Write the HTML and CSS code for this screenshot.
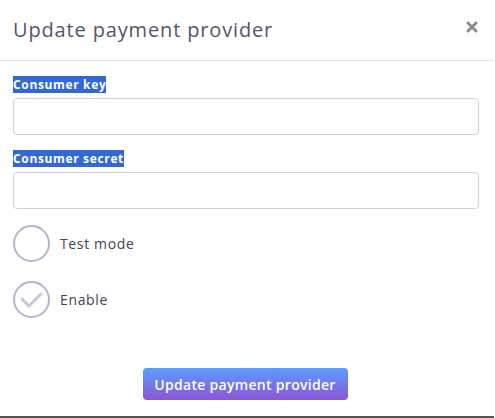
FILE: index.html
```html
<!DOCTYPE html>
<html lang="en">
<head>
<meta charset="utf-8">
<title>Update payment provider</title>
<link rel="stylesheet" href="styles.css">
</head>
<body>
<div class="modal">
  <div class="modal-header">
    <h2 class="modal-title">Update payment provider</h2>
    <button class="close" type="button" aria-label="Close">
      <svg width="12" height="12" viewBox="0 0 12 12"><path d="M2 2 L10 10 M10 2 L2 10" stroke="#8a8a8a" stroke-width="3" stroke-linecap="round"/></svg>
    </button>
  </div>
  <div class="modal-body">
    <div class="field">
      <label class="label"><span class="sel">Consumer key</span></label>
      <input class="input" type="text">
    </div>
    <div class="field">
      <label class="label"><span class="sel">Consumer secret</span></label>
      <input class="input" type="text">
    </div>
    <div class="check-row">
      <span class="circle"></span>
      <span class="check-text">Test mode</span>
    </div>
    <div class="check-row">
      <span class="circle">
        <svg width="37" height="37" viewBox="0 0 37 37"><path d="M9 18 L16 25 L28 13" fill="none" stroke="#c9c6d8" stroke-width="3" stroke-linecap="round" stroke-linejoin="round"/></svg>
      </span>
      <span class="check-text">Enable</span>
    </div>
  </div>
  <div class="modal-footer">
    <button class="btn" type="button">Update payment provider</button>
  </div>
</div>
</body>
</html>
```

FILE: styles.css
```css
html, body {
  margin: 0;
  padding: 0;
  background: #ffffff;
}
body {
  font-family: "Open Sans", "Liberation Sans", sans-serif;
  width: 495px;
  height: 418px;
  overflow: hidden;
}
.modal {
  width: 494px;
  height: 416px;
  border-bottom: 2px solid #555555;
  background: #fff;
  display: flex;
  flex-direction: column;
}
.modal-header {
  height: 61px;
  box-sizing: border-box;
  border-bottom: 1px solid #e6e6ea;
  display: flex;
  align-items: center;
  justify-content: space-between;
  padding: 0 15px 0 13px;
}
.modal-title {
  margin: 0 0 2px 0;
  font-weight: 400;
  font-size: 20px;
  color: #555468;
  letter-spacing: 0.85px;
}
.close {
  border: 0;
  background: none;
  padding: 0;
  width: 14px;
  height: 14px;
  display: flex;
  align-items: center;
  justify-content: center;
  margin-top: -6px;
}
.modal-body {
  padding: 16px 15px 0 13px;
  display: flex;
  flex-direction: column;
}
.field {
  display: flex;
  flex-direction: column;
  margin-bottom: 16px;
}
.label {
  font-size: 12px;
  font-weight: 700;
  line-height: 16px;
  height: 16px;
  margin-bottom: 5px;
}
.sel {
  background: #3367d6;
  color: #ffffff;
  letter-spacing: 0.65px;
}
.input {
  box-sizing: border-box;
  height: 37px;
  width: 466px;
  border: 1px solid #cfd2d8;
  border-radius: 4px;
  margin: 0;
}
.check-row {
  display: flex;
  align-items: center;
  height: 37px;
  margin-bottom: 19px;
}
.circle {
  box-sizing: border-box;
  width: 37px;
  height: 37px;
  border: 2px solid #b7b3cb;
  border-radius: 50%;
  position: relative;
  flex: none;
}
.circle svg {
  position: absolute;
  left: -2px;
  top: -2px;
}
.check-text {
  margin-left: 10px;
  font-size: 14px;
  color: #44434f;
  letter-spacing: 0.65px;
}
.modal-footer {
  margin-top: auto;
  display: flex;
  justify-content: center;
  padding-bottom: 16px;
  padding-right: 4px;
}
.btn {
  height: 32px;
  width: 205px;
  border: 0;
  border-radius: 4px;
  background: linear-gradient(to bottom, #5b9cff, #8c56d6);
  color: #ffffff;
  font-family: "Open Sans", "Liberation Sans", sans-serif;
  font-size: 14px;
  font-weight: 600;
  letter-spacing: 0.3px;
  padding: 0;
}
```
